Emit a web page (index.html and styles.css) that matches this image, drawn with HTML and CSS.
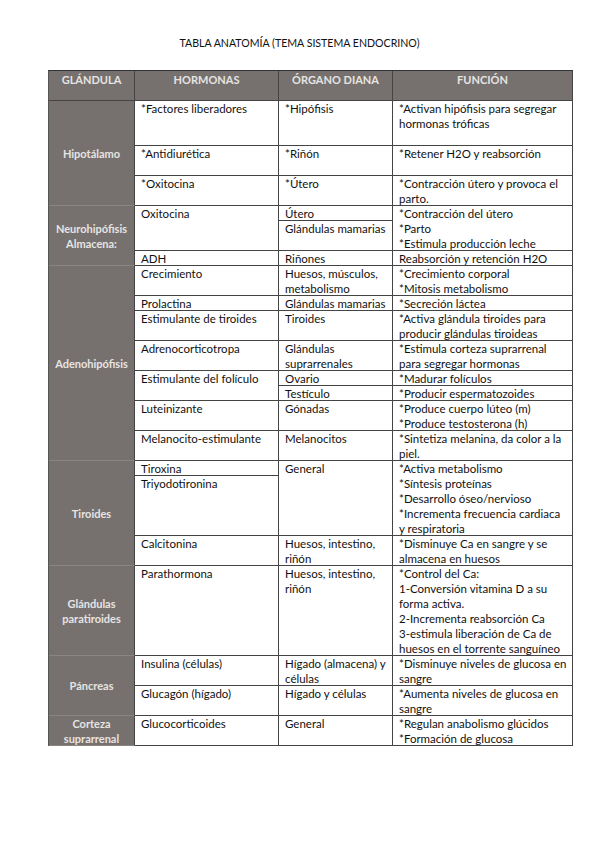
FILE: index.html
```html
<!DOCTYPE html>
<html lang="es">
<head>
<meta charset="utf-8">
<title>Tabla anatomía</title>
<link rel="stylesheet" href="styles.css">
</head>
<body>
<div class="page">
  <h1 class="title">TABLA ANATOMÍA (TEMA SISTEMA ENDOCRINO)</h1>
  <div class="table">
    <div class="th c1">GLÁNDULA</div>
    <div class="th">HORMONAS</div>
    <div class="th">ÓRGANO DIANA</div>
    <div class="th">FUNCIÓN</div>

    <!-- Hipotálamo -->
    <div class="g" style="grid-row: 2 / span 3">Hipotálamo</div>
    <div class="td">*Factores liberadores</div>
    <div class="td">*Hipófisis</div>
    <div class="td">*Activan hipófisis para segregar hormonas tróficas</div>
    <div class="td">*Antidiurética</div>
    <div class="td">*Riñón</div>
    <div class="td">*Retener H2O y reabsorción</div>
    <div class="td">*Oxitocina</div>
    <div class="td">*Útero</div>
    <div class="td">*Contracción útero y provoca el parto.</div>

    <!-- Neurohipófisis -->
    <div class="g" style="grid-row: 5 / span 3">Neurohipófisis<br>Almacena:</div>
    <div class="td s2">Oxitocina</div>
    <div class="td">Útero</div>
    <div class="td s2">*Contracción del útero<br>*Parto<br>*Estimula producción leche</div>
    <div class="td">Glándulas mamarias</div>
    <div class="td">ADH</div>
    <div class="td">Riñones</div>
    <div class="td">Reabsorción y retención H2O</div>

    <!-- Adenohipófisis -->
    <div class="g" style="grid-row: 8 / span 8">Adenohipófisis</div>
    <div class="td">Crecimiento</div>
    <div class="td">Huesos, músculos, metabolismo</div>
    <div class="td">*Crecimiento corporal<br>*Mitosis metabolismo</div>
    <div class="td">Prolactina</div>
    <div class="td">Glándulas mamarias</div>
    <div class="td">*Secreción láctea</div>
    <div class="td">Estimulante de tiroides</div>
    <div class="td">Tiroides</div>
    <div class="td">*Activa glándula tiroides para producir glándulas tiroideas</div>
    <div class="td">Adrenocorticotropa</div>
    <div class="td">Glándulas suprarrenales</div>
    <div class="td">*Estimula corteza suprarrenal para segregar hormonas</div>
    <div class="td s2">Estimulante del folículo</div>
    <div class="td">Ovario</div>
    <div class="td">*Madurar folículos</div>
    <div class="td">Testículo</div>
    <div class="td">*Producir espermatozoides</div>
    <div class="td">Luteinizante</div>
    <div class="td">Gónadas</div>
    <div class="td">*Produce cuerpo lúteo (m)<br>*Produce testosterona (h)</div>
    <div class="td">Melanocito-estimulante</div>
    <div class="td">Melanocitos</div>
    <div class="td">*Sintetiza melanina, da color a la piel.</div>

    <!-- Tiroides -->
    <div class="g" style="grid-row: 16 / span 3">Tiroides</div>
    <div class="td">Tiroxina</div>
    <div class="td s2">General</div>
    <div class="td s2">*Activa metabolismo<br>*Síntesis proteínas<br>*Desarrollo óseo/nervioso<br>*Incrementa frecuencia cardiaca y respiratoria</div>
    <div class="td">Triyodotironina</div>
    <div class="td">Calcitonina</div>
    <div class="td">Huesos, intestino, riñón</div>
    <div class="td">*Disminuye Ca en sangre y se almacena en huesos</div>

    <!-- Paratiroides -->
    <div class="g" style="grid-row: 19 / span 1">Glándulas<br>paratiroides</div>
    <div class="td">Parathormona</div>
    <div class="td">Huesos, intestino, riñón</div>
    <div class="td">*Control del Ca:<br>1-Conversión vitamina D a su forma activa.<br>2-Incrementa reabsorción Ca<br>3-estimula liberación de Ca de huesos en el torrente sanguíneo</div>

    <!-- Páncreas -->
    <div class="g" style="grid-row: 20 / span 2">Páncreas</div>
    <div class="td">Insulina (células)</div>
    <div class="td">Hígado (almacena) y células</div>
    <div class="td">*Disminuye niveles de glucosa en sangre</div>
    <div class="td">Glucagón (hígado)</div>
    <div class="td">Hígado y células</div>
    <div class="td">*Aumenta niveles de glucosa en sangre</div>

    <!-- Corteza suprarrenal -->
    <div class="g" style="grid-row: 22 / span 1">Corteza<br>suprarrenal</div>
    <div class="td">Glucocorticoides</div>
    <div class="td">General</div>
    <div class="td">*Regulan anabolismo glúcidos<br>*Formación de glucosa</div>
  </div>
</div>
</body>
</html>
```

FILE: styles.css
```css
* {
  box-sizing: border-box;
}

html, body {
  margin: 0;
  padding: 0;
  background: #ffffff;
}

.page {
  width: 599px;
  font-family: "Lato", "Liberation Sans", sans-serif;
  font-size: 11.5px;
  color: #111;
}

.title {
  margin: 0;
  padding-top: 35px;
  height: 70px;
  font-size: 10.6px;
  line-height: 16px;
  font-weight: normal;
  text-align: center;
  color: #111;
}

.table {
  margin-left: 48px;
  width: 525px;
  display: grid;
  grid-template-columns: 86px 144px 114px 180px;
  grid-template-rows:
    30px
    45px 30px 30px
    15px 30px 15px
    30px 15px 30px 30px 15px 15px 30px 30px
    15px 60px 30px
    90px
    30px 30px
    30px;
  grid-auto-flow: row dense;
  border-top: 1px solid #333;
  border-left: 1px solid #555;
}

.th,
.td,
.g {
  border-right: 1px solid #444;
  border-bottom: 1px solid #444;
  line-height: 15px;
  overflow: visible;
}

.th {
  background: #76716f;
  color: #e6e4e2;
  font-weight: bold;
  font-size: 11px;
  text-align: center;
  padding-top: 1px;
}

.g {
  grid-column: 1;
  background: #76716f;
  color: #e6e4e2;
  font-weight: bold;
  font-size: 11px;
  text-align: center;
  display: flex;
  align-items: center;
  justify-content: center;
  border-bottom-color: #8a8583;
}

.td {
  padding: 0 4px 0 6px;
  white-space: normal;
}

.s2 {
  grid-row: span 2;
}
```
